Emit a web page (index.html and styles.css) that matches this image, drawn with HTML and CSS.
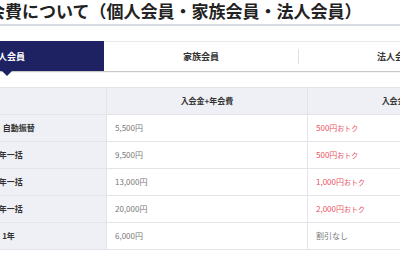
FILE: index.html
```html
<!DOCTYPE html>
<html lang="ja">
<head>
<meta charset="utf-8">
<title>会費について</title>
<link rel="stylesheet" href="styles.css">
</head>
<body>
<div class="page">
  <h1 class="title">入会金・年会費について（個人会員・家族会員・法人会員）</h1>
  <div class="tabs">
    <div class="tab is-active">個人会員</div>
    <div class="tab">家族会員</div>
    <div class="tab has-divider">法人会員</div>
  </div>
  <table class="fee-table">
    <colgroup>
      <col class="col-label">
      <col class="col-value">
      <col class="col-value">
    </colgroup>
    <thead>
      <tr>
        <th class="label"></th>
        <th>入会金+年会費</th>
        <th>入会金+年会費</th>
      </tr>
    </thead>
    <tbody>
      <tr>
        <th class="label">1年・自動振替</th>
        <td>5,500円</td>
        <td class="discount">500円<span class="small">おトク</span></td>
      </tr>
      <tr>
        <th class="label">2年一括</th>
        <td>9,500円</td>
        <td class="discount">500円<span class="small">おトク</span></td>
      </tr>
      <tr>
        <th class="label">3年一括</th>
        <td>13,000円</td>
        <td class="discount">1,000円<span class="small">おトク</span></td>
      </tr>
      <tr>
        <th class="label">5年一括</th>
        <td>20,000円</td>
        <td class="discount">2,000円<span class="small">おトク</span></td>
      </tr>
      <tr>
        <th class="label">1年</th>
        <td>6,000円</td>
        <td>割引なし</td>
      </tr>
    </tbody>
  </table>
</div>
</body>
</html>
```
FILE: styles.css
```css
html, body {
  margin: 0;
  padding: 0;
  background: #ffffff;
  overflow: hidden;
}

body {
  font-family: "Noto Sans CJK JP", "Noto Sans", sans-serif;
  color: #333;
}

.page {
  width: 620px;
  margin-left: -97px;
}

.title {
  margin: 0;
  font-size: 17px;
  line-height: 21px;
  font-weight: 700;
  color: #222;
  white-space: nowrap;
  padding-bottom: 3px;
  border-bottom: 2px solid #d9dce2;
}

.tabs {
  display: flex;
  width: 582px;
  margin: 15px 0 0 7px;
  background: #fff;
  box-shadow: 0 1px 1px rgba(0, 0, 0, 0.22);
}

.tab {
  flex: 1;
  height: 29px;
  border-top: 1px solid #e8e9ed;
  display: flex;
  align-items: center;
  justify-content: center;
  font-size: 9px;
  font-weight: 700;
  color: #333;
  position: relative;
}

.tab.is-active {
  background: #1e2162;
  border-top-color: #1e2162;
  color: #fff;
}

.tab.is-active::after {
  content: "";
  position: absolute;
  top: 100%;
  left: 50%;
  margin-left: -5px;
  border-top: 5px solid #1e2162;
  border-left: 5px solid transparent;
  border-right: 5px solid transparent;
}

.tab.has-divider::before {
  content: "";
  position: absolute;
  left: 0;
  top: 7px;
  width: 1px;
  height: 15px;
  background: #dedfe3;
}

.fee-table {
  margin: 16px 0 0 7px;
  width: 598px;
  table-layout: fixed;
  border-collapse: collapse;
  font-size: 8px;
}

.col-label { width: 196px; }
.col-value { width: 201px; }

.fee-table th,
.fee-table td {
  height: 26px;
  padding: 0 8px;
  border: 1px solid #e3e4e9;
  vertical-align: middle;
  line-height: 12px;
  white-space: nowrap;
}

.fee-table thead th {
  background: #eff0f5;
  font-weight: 700;
  color: #333;
  text-align: center;
}

.fee-table tbody th.label {
  background: #eff0f5;
  font-weight: 700;
  color: #333;
  text-align: center;
}

.fee-table td {
  color: #777;
  text-align: left;
}

.fee-table td.discount {
  color: #e8525f;
}

.small {
  font-size: 7px;
}
```
